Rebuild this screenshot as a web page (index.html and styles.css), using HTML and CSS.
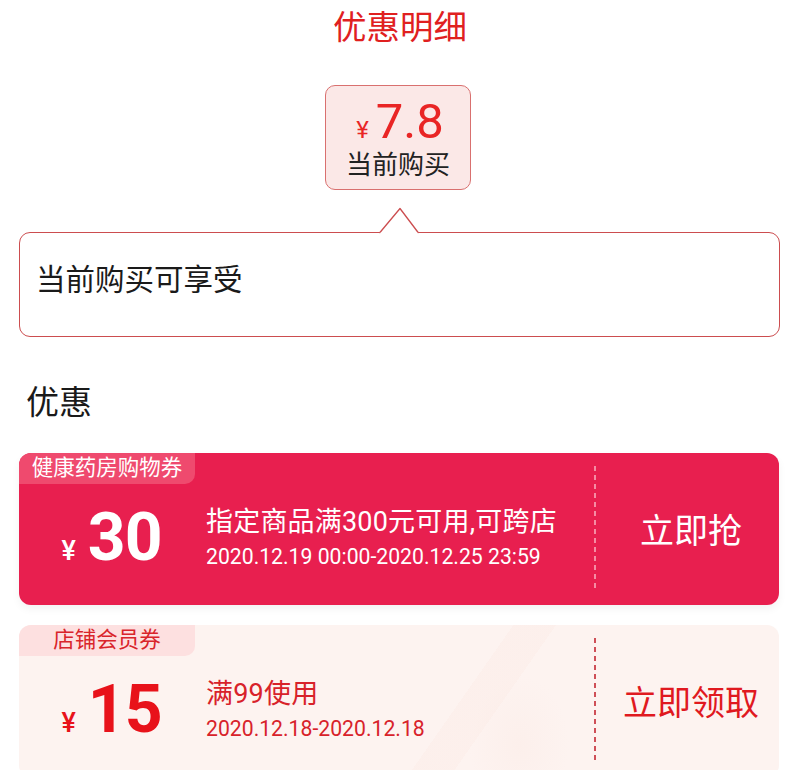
FILE: index.html
```html
<!DOCTYPE html>
<html lang="zh-CN">
<head>
<meta charset="utf-8">
<title>优惠明细</title>
<link rel="stylesheet" href="styles.css">
</head>
<body>
<div class="page">
  <h1 class="title">优惠明细</h1>

  <div class="price-wrap">
    <div class="price-box">
      <div class="price"><span class="yen">¥</span><span class="num">7.8</span></div>
      <div class="price-label">当前购买</div>
    </div>
  </div>

  <div class="tip">
    <svg class="tip-arrow" width="41" height="27" viewBox="0 0 41 27" aria-hidden="true">
      <path d="M0.5 26 L21 1.5 L39.5 26" fill="#fff" stroke="#cc4d4f" stroke-width="1.3" stroke-linejoin="round"/>
      <rect x="1.5" y="25.6" width="37" height="2" fill="#fff"/>
    </svg>
    <div class="tip-text">当前购买可享受</div>
  </div>

  <div class="section-title">优惠</div>

  <div class="card card-red">
    <div class="tag">健康药房购物券</div>
    <div class="amount"><span class="a-yen">¥</span><span class="a-num">30</span></div>
    <div class="info">
      <div class="info-main">指定商品满300元可用,可跨店</div>
      <div class="info-date">2020.12.19 00:00-2020.12.25 23:59</div>
    </div>
    <div class="action"><span>立即抢</span></div>
  </div>

  <div class="card card-light">
    <div class="tag">店铺会员券</div>
    <div class="amount"><span class="a-yen">¥</span><span class="a-num">15</span></div>
    <div class="info">
      <div class="info-main">满99使用</div>
      <div class="info-date">2020.12.18-2020.12.18</div>
    </div>
    <div class="action"><span>立即领取</span></div>
  </div>
</div>
</body>
</html>
```

FILE: styles.css
```css
html, body {
  margin: 0;
  padding: 0;
  background: #ffffff;
}

body {
  font-family: Roboto, "Noto Sans CJK SC", sans-serif;
  color: #222222;
  width: 800px;
  height: 770px;
  overflow: hidden;
}

.page {
  display: flex;
  flex-direction: column;
}

.title {
  margin: 0;
  padding-top: 8px;
  font-size: 33.5px;
  line-height: 40px;
  font-weight: 400;
  color: #e0201f;
  text-align: center;
}

.price-wrap {
  margin-top: 37px;
  display: flex;
  justify-content: center;
}

.price-box {
  box-sizing: border-box;
  width: 146px;
  height: 105px;
  margin-left: -4px;
  border: 1px solid #d9706f;
  border-radius: 10px;
  background: #fbe8e7;
  padding-top: 12px;
  text-align: center;
}

.price {
  height: 48px;
  line-height: 48px;
  color: #e92525;
  display: flex;
  justify-content: center;
  align-items: baseline;
  padding-left: 4px;
}

.price .yen {
  font-size: 24px;
  margin-right: 7px;
}

.price .num {
  font-size: 49px;
}

.price-label {
  margin-top: 4px;
  font-size: 26px;
  line-height: 30px;
  color: #222222;
}

.tip {
  position: relative;
  box-sizing: border-box;
  margin: 42px 20px 0 19px;
  height: 105px;
  border: 1.3px solid #cc4d4f;
  border-radius: 11px;
  padding: 27px 16px 0;
}

.tip-arrow {
  position: absolute;
  left: 359px;
  top: -26px;
  display: block;
}

.tip-text {
  font-size: 29.5px;
  line-height: 40px;
  color: #1a1a1a;
}

.section-title {
  margin-top: 46px;
  padding-left: 26px;
  font-size: 33px;
  line-height: 40px;
  color: #1a1a1a;
}

.card {
  margin: 30px 21px 0 19px;
  height: 152px;
  border-radius: 12px;
  overflow: hidden;
  display: grid;
  grid-template-columns: 182px 1fr 185px;
  grid-template-rows: 31px 1fr;
}

.card + .card {
  margin-top: 20px;
}

.tag {
  grid-column: 1;
  grid-row: 1;
  width: 176px;
  height: 31px;
  border-bottom-right-radius: 10px;
  font-size: 21.5px;
  line-height: 30px;
  text-align: center;
}

.amount {
  grid-column: 1;
  grid-row: 2;
  display: flex;
  justify-content: center;
  align-items: baseline;
  padding-top: 19px;
  padding-left: 3px;
  font-weight: 700;
}

.a-yen {
  font-size: 27px;
  margin-right: 12px;
  font-weight: 500;
}

.a-num {
  font-size: 66px;
  line-height: 70px;
  letter-spacing: -1px;
}

.info {
  grid-column: 2;
  grid-row: 2;
  display: flex;
  flex-direction: column;
  justify-content: center;
  padding-left: 5px;
  padding-bottom: 14px;
}

.info-main {
  font-size: 27px;
  line-height: 34px;
  letter-spacing: 0.2px;
}

.info-date {
  margin-top: 4px;
  font-size: 21.2px;
  line-height: 28px;
}

.action {
  grid-column: 3;
  grid-row: 1 / span 2;
  margin: 13px 0 15px;
  padding-left: 9px;
  display: flex;
  align-items: center;
  justify-content: center;
  font-size: 34px;
  background-repeat: no-repeat;
  background-position: left top;
  background-size: 2px 100%;
}

/* red card */
.card-red {
  background: #e81f4f;
  color: #ffffff;
  box-shadow: 0 4px 8px rgba(0, 0, 0, 0.05);
}

.card-red .tag {
  background: #ef4a6e;
  color: #ffffff;
}

.card-red .action {
  background-image: repeating-linear-gradient(to bottom, #f58ba3 0 5px, transparent 5px 9px);
}

/* light card */
.card-light {
  background:
    linear-gradient(125deg, rgba(253, 242, 239, 0) 0 405px, rgba(251, 232, 226, 0.3) 405px 440px, rgba(253, 242, 239, 0) 440px),
    radial-gradient(ellipse 50px 70px at 500px 120px, rgba(250, 232, 226, 0.35), rgba(250, 232, 226, 0) 100%),
    #fdf3f0;
  color: #e0191f;
}

.card-light .tag {
  background: #fde0e0;
  color: #d9252b;
}

.card-light .a-yen,
.card-light .a-num {
  color: #e8121a;
}

.card-light .info-main,
.card-light .info-date {
  color: #d8222a;
}

.card-light .action {
  color: #e0191f;
  background-image: repeating-linear-gradient(to bottom, #cf4f57 0 5px, transparent 5px 9px);
}
```
